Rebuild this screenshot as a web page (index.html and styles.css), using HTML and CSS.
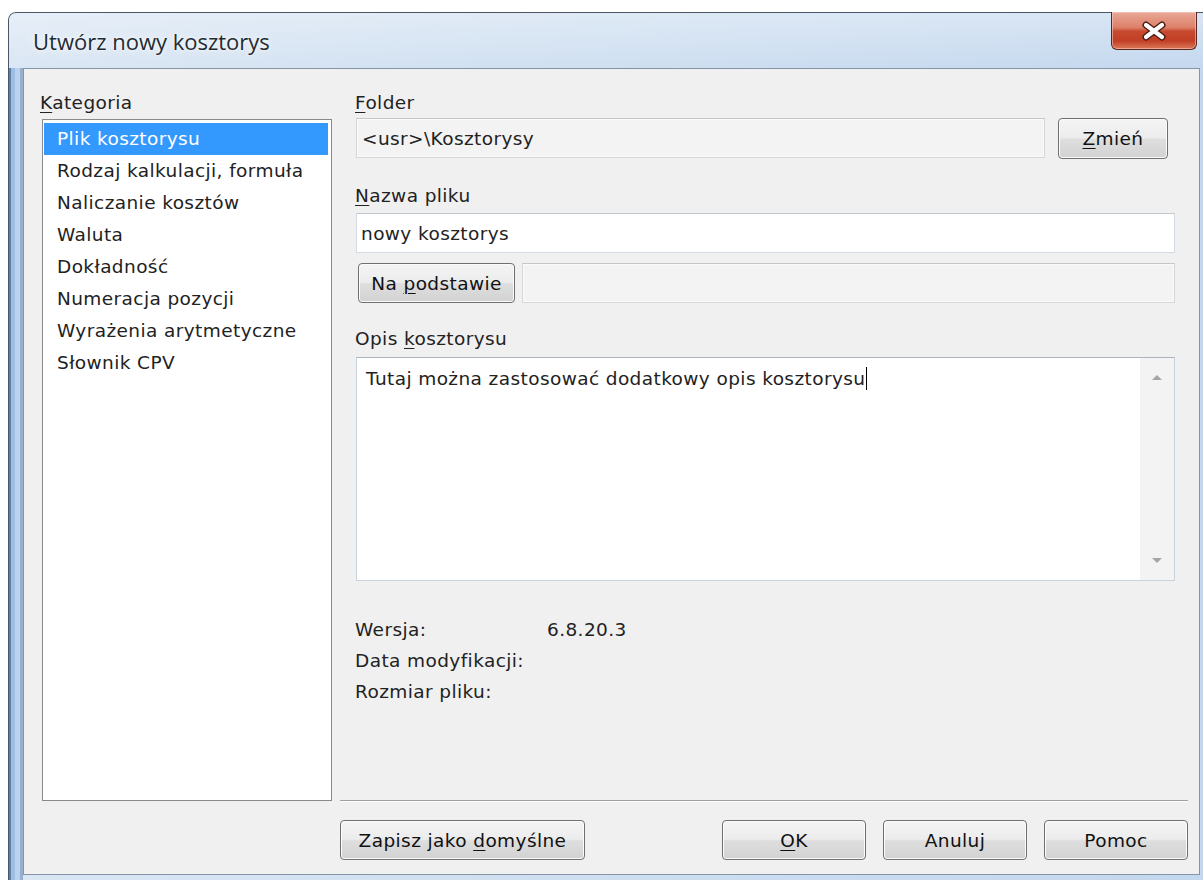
FILE: index.html
```html
<!DOCTYPE html>
<html lang="pl">
<head>
<meta charset="utf-8">
<title>Utwórz nowy kosztorys</title>
<link rel="stylesheet" href="styles.css">
</head>
<body>
<div class="window">
  <div class="titlebar">
    <div class="title">Utwórz nowy kosztorys</div>
    <button class="close" aria-label="Zamknij">
      <svg width="26" height="20" viewBox="0 0 26 20">
        <path d="M5 4 L21 16 M21 4 L5 16" stroke="#4b1c15" stroke-width="7" stroke-linecap="round"/>
        <path d="M5 4 L21 16 M21 4 L5 16" stroke="#ffffff" stroke-width="4.2" stroke-linecap="round"/>
      </svg>
    </button>
  </div>
  <div class="client">
    <div class="layout">
      <div class="cat-col">
        <div class="label"><u>K</u>ategoria</div>
        <ul class="listbox">
          <li class="selected">Plik kosztorysu</li>
          <li>Rodzaj kalkulacji, formuła</li>
          <li>Naliczanie kosztów</li>
          <li>Waluta</li>
          <li>Dokładność</li>
          <li>Numeracja pozycji</li>
          <li>Wyrażenia arytmetyczne</li>
          <li>Słownik CPV</li>
        </ul>
      </div>
      <div class="main-col">
        <div class="label"><u>F</u>older</div>
        <div class="folder-row">
          <div class="field readonly folder">&lt;usr&gt;\Kosztorysy</div>
          <button class="btn zmien"><u>Z</u>mień</button>
        </div>
        <div class="label label-name"><u>N</u>azwa pliku</div>
        <div class="field name">nowy kosztorys</div>
        <div class="base-row">
          <button class="btn base">Na <u>p</u>odstawie</button>
          <div class="field readonly base-field"></div>
        </div>
        <div class="label label-desc">Opis <u>k</u>osztorysu</div>
        <div class="memo">
          <div class="memo-text">Tutaj można zastosować dodatkowy opis kosztorysu<span class="caret"></span></div>
          <div class="vscroll">
            <span class="arrow up"></span>
            <span class="arrow down"></span>
          </div>
        </div>
        <div class="info">
          <span>Wersja:</span><span>6.8.20.3</span>
          <span>Data modyfikacji:</span><span></span>
          <span>Rozmiar pliku:</span><span></span>
        </div>
      </div>
      <div class="buttons">
        <button class="btn wide">Zapisz jako <u>d</u>omyślne</button>
        <button class="btn"><u>O</u>K</button>
        <button class="btn">Anuluj</button>
        <button class="btn">Pomoc</button>
      </div>
    </div>
  </div>
</div>
</body>
</html>
```
FILE: styles.css
```css
* {
  box-sizing: border-box;
}

html,
body {
  margin: 0;
  height: 100%;
  overflow: hidden;
  background: #ffffff;
}

body {
  font-family: "DejaVu Sans", sans-serif;
  font-size: 18.5px;
  letter-spacing: 0.4px;
  color: #222222;
}

u {
  text-decoration-thickness: 1px;
  text-underline-offset: 3px;
}

/* Aero window frame */
.window {
  margin: 12px 0 0 8px;
  width: 1207px;
  height: 880px;
  padding: 0 15px;
  border-radius: 8px 8px 0 0;
  background:
    linear-gradient(to right, #34404f 0 1px, #5f7ea6 1px 3px, #9dbde3 3px 7px, #b9d2ef 7px 12px, #98b0cc 12px 15px) 0 56px / 15px 100% no-repeat,
    linear-gradient(to bottom, rgba(255, 255, 255, 0.35), rgba(255, 255, 255, 0) 60px),
    linear-gradient(to right, #dae6f4 0%, #d0e0f1 40%, #c3d7ee 100%);
  box-shadow: inset 0 1px 0 #4a5666, inset 1px 0 0 #4a5666;
}

.titlebar {
  display: flex;
  align-items: flex-start;
  height: 56px;
}

.title {
  margin: 14px 0 0 10px;
  font-family: "Open Sans", "Noto Sans", sans-serif;
  font-size: 22px;
  line-height: 30px;
  letter-spacing: 0;
  color: #1f2b33;
  text-shadow: 0 0 8px rgba(255, 255, 255, 0.95), 0 0 3px rgba(255, 255, 255, 0.9);
}

.close {
  margin: 0 3px 0 auto;
  width: 86px;
  height: 38px;
  padding: 0;
  display: flex;
  align-items: center;
  justify-content: center;
  border: 1px solid #5a2620;
  border-top: none;
  border-radius: 0 0 6px 6px;
  background: linear-gradient(#e9a898 0%, #dc8068 42%, #c64a2f 52%, #c13f25 78%, #dc7a58 100%);
  box-shadow: inset 0 0 0 1px rgba(255, 210, 200, 0.55);
}

/* Dialog client area */
.client {
  height: 807px;
  background: #f0f0f0;
  border: 1px solid #8595a8;
}

.layout {
  display: grid;
  grid-template-columns: 292px 848px;
  grid-template-rows: 709px 40px;
  column-gap: 8px;
  row-gap: 19px;
  padding: 23px 11px 14px 16px;
}

.label {
  height: 22px;
  line-height: 22px;
  white-space: nowrap;
}

.cat-col {
  display: flex;
  flex-direction: column;
}

.listbox {
  flex: 1;
  margin: 5px 0 0 2px;
  padding: 3px 0 0;
  list-style: none;
  background: #ffffff;
  border: 1px solid #878a8f;
}

.listbox li {
  height: 32px;
  line-height: 32px;
  margin: 0 3px 0 1px;
  padding-left: 13px;
  white-space: nowrap;
}

.listbox li.selected {
  background: #3399ff;
  color: #ffffff;
}

.main-col {
  display: flex;
  flex-direction: column;
  padding: 0 13px 0 15px;
  border-bottom: 1px solid #a0a0a0;
  box-shadow: 0 1px 0 #ffffff;
}

.field {
  height: 40px;
  display: flex;
  align-items: center;
  white-space: nowrap;
  border: 1px solid #d4dae2;
  border-top-color: #bfc6ce;
  background: #ffffff;
}

.field.readonly {
  background: #f3f3f3;
  border-color: #d6d6d6;
  border-top-color: #c6c6c6;
  box-shadow: inset 0 0 0 1px #fafafa;
}

.folder-row {
  display: flex;
  margin-top: 4px;
  margin-left: 1px;
}

.folder {
  flex: 1;
  padding-left: 5px;
}

.btn {
  font: inherit;
  letter-spacing: inherit;
  color: #111111;
  height: 40px;
  padding: 0;
  border: 1px solid #707070;
  border-radius: 4px;
  background: linear-gradient(#f4f4f4 0%, #ececec 48%, #dedede 52%, #d2d2d2 100%);
  box-shadow: inset 0 0 0 1px #fbfbfb;
  white-space: nowrap;
}

.zmien {
  width: 110px;
  margin: 0 7px 0 13px;
  height: 41px;
}

.label-name {
  margin-top: 26px;
}

.name {
  margin: 6px 0 0 1px;
  padding-left: 4px;
}

.base-row {
  display: flex;
  margin-top: 10px;
}

.base {
  width: 157px;
  margin-left: 3px;
}

.base-field {
  flex: 1;
  margin-left: 7px;
  background: #f6f6f6;
}

.label-desc {
  margin-top: 25px;
}

.memo {
  display: flex;
  height: 224px;
  margin: 7px 0 0 1px;
  background: #ffffff;
  border: 1px solid #c8d3de;
  border-top-color: #abb3bd;
}

.memo-text {
  flex: 1;
  padding: 9px 0 0 9px;
  line-height: 22px;
}

.caret {
  display: inline-block;
  width: 1px;
  height: 23px;
  margin-left: 1px;
  vertical-align: -5px;
  background: #000000;
}

.vscroll {
  width: 34px;
  display: flex;
  flex-direction: column;
  justify-content: space-between;
  align-items: center;
  padding: 17px 0 17px;
  background: #f3f3f3;
}

.arrow {
  width: 0;
  height: 0;
  border-left: 5px solid transparent;
  border-right: 5px solid transparent;
}

.arrow.up {
  border-bottom: 5px solid #a6a6a6;
}

.arrow.down {
  border-top: 5px solid #a6a6a6;
}

.info {
  display: grid;
  grid-template-columns: 192px auto;
  margin-top: 33px;
  line-height: 31px;
  white-space: nowrap;
}

.buttons {
  grid-column: 2;
  display: flex;
  gap: 17px;
}

.buttons .btn {
  width: 144px;
}

.buttons .btn.wide {
  width: 245px;
  margin-right: auto;
}
```
